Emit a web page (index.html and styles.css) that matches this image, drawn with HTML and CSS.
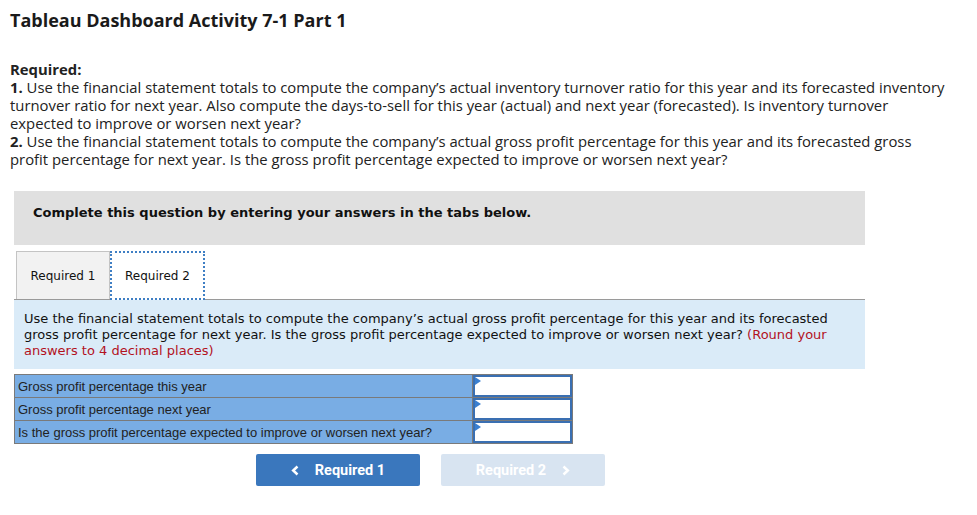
FILE: index.html
```html
<!DOCTYPE html>
<html>
<head>
<meta charset="utf-8">
<link rel="stylesheet" href="styles.css">
</head>
<body>
<h1 class="title">Tableau Dashboard Activity 7-1 Part 1</h1>
<div class="req">
  <div class="req-head">Required:</div>
  <div><b>1.</b> Use the financial statement totals to compute the company’s actual inventory turnover ratio for this year and its forecasted inventory turnover ratio for next year. Also compute the days-to-sell for this year (actual) and next year (forecasted). Is inventory turnover expected to improve or worsen next year?</div>
  <div><b>2.</b> Use the financial statement totals to compute the company’s actual gross profit percentage for this year and its forecasted gross profit percentage for next year. Is the gross profit percentage expected to improve or worsen next year?</div>
</div>
<div class="panel">
  <div class="banner">Complete this question by entering your answers in the tabs below.</div>
  <div class="tabs">
    <div class="tab">Required 1</div>
    <div class="tab active">Required 2</div>
  </div>
  <div class="info">Use the financial statement totals to compute the company’s actual gross profit percentage for this year and its forecasted gross profit percentage for next year. Is the gross profit percentage expected to improve or worsen next year? <span class="note">(Round your answers to 4 decimal places)</span></div>
  <table class="grid">
    <tr><td class="label">Gross profit percentage this year</td><td class="cell"><div class="input"></div></td></tr>
    <tr><td class="label">Gross profit percentage next year</td><td class="cell"><div class="input"></div></td></tr>
    <tr><td class="label">Is the gross profit percentage expected to improve or worsen next year?</td><td class="cell"><div class="input"></div></td></tr>
  </table>
  <div class="nav">
    <div class="btn prev"><svg class="chev" width="8" height="11" viewBox="0 0 8 11"><polyline points="6.5,1.5 2.2,5.5 6.5,9.5" fill="none" stroke="#fff" stroke-width="2.5"/></svg>Required 1</div>
    <div class="btn next">Required 2<svg class="chev" width="8" height="11" viewBox="0 0 8 11"><polyline points="1.5,1.5 5.8,5.5 1.5,9.5" fill="none" stroke="#fff" stroke-width="2.5"/></svg></div>
  </div>
</div>
</body>
</html>
```
FILE: styles.css
```css
body {
  margin: 0;
  padding: 10px 0 0 10px;
  font-family: "Open Sans", Lato, sans-serif;
  color: #1a1a1a;
  background: #fff;
}
.title {
  margin: 0;
  font-size: 18px;
  line-height: 20px;
  font-weight: 700;
  color: #1a1a1a;
}
.req {
  margin-top: 30px;
  font-size: 14.85px;
  line-height: 18px;
  width: 938px;
  color: #222;
}
.req-head {
  font-weight: 700;
}
.panel {
  margin-left: 4px;
  margin-top: 23px;
  width: 851px;
}
.banner {
  background: #e0e0e0;
  height: 54px;
  box-sizing: border-box;
  padding: 14px 0 0 19px;
  font-family: Verdana, "DejaVu Sans", sans-serif;
  font-weight: 700;
  font-size: 13px;
  color: #111;
}
.tabs {
  display: flex;
  margin-top: 6px;
  padding-left: 2px;
  border-bottom: 1px solid #9a9a9a;
}
.tab {
  height: 48px;
  width: 94px;
  box-sizing: border-box;
  display: flex;
  align-items: center;
  justify-content: center;
  white-space: nowrap;
  font-family: Verdana, "DejaVu Sans", sans-serif;
  font-size: 12px;
  color: #111;
  background: #f2f2f2;
  border: 1px solid #c4c4c4;
  border-bottom: none;
}
.tab.active {
  background: #fff;
  border: 2px dotted #3f7fc4;
  height: 49px;
  margin-bottom: -1px;
  width: 95px;
}
.info {
  background: #daebf8;
  padding: 11px 10px 10px 10px;
  font-family: Verdana, "DejaVu Sans", sans-serif;
  font-size: 13px;
  line-height: 16px;
  color: #111;
}
.note {
  color: #b3121e;
}
.grid {
  margin-top: 5px;
  border-collapse: collapse;
  font-family: Arial, "Liberation Sans", sans-serif;
  font-size: 13px;
  line-height: 15px;
  color: #222;
}
.grid td {
  border: 1px solid #7a7a7a;
  padding: 0;
}
.label {
  background: #79ade4;
  width: 454px;
  padding-left: 3px !important;
}
.cell {
  width: 99px;
  background: #79ade4;
}
.input {
  position: relative;
  height: 22px;
  box-sizing: border-box;
  background: #fff;
  border: 2px solid #3a6fb2;
}
.input::before {
  content: "";
  position: absolute;
  left: 0;
  top: 0;
  border-left: 6px solid #3a7fd0;
  border-top: 4px solid transparent;
  border-bottom: 4px solid transparent;
}
.nav {
  display: flex;
  gap: 21px;
  margin-top: 10px;
  margin-left: 242px;
}
.btn {
  width: 164px;
  height: 32px;
  border-radius: 2px;
  display: flex;
  align-items: center;
  justify-content: center;
  font-family: Roboto, Arial, sans-serif;
  font-weight: 700;
  font-size: 14.5px;
  color: #fff;
}
.prev {
  background: #3a77bd;
}
.next {
  background: #d8e4f1;
}
.prev .chev {
  margin-right: 16px;
}
.next .chev {
  margin-left: 16px;
}
```
